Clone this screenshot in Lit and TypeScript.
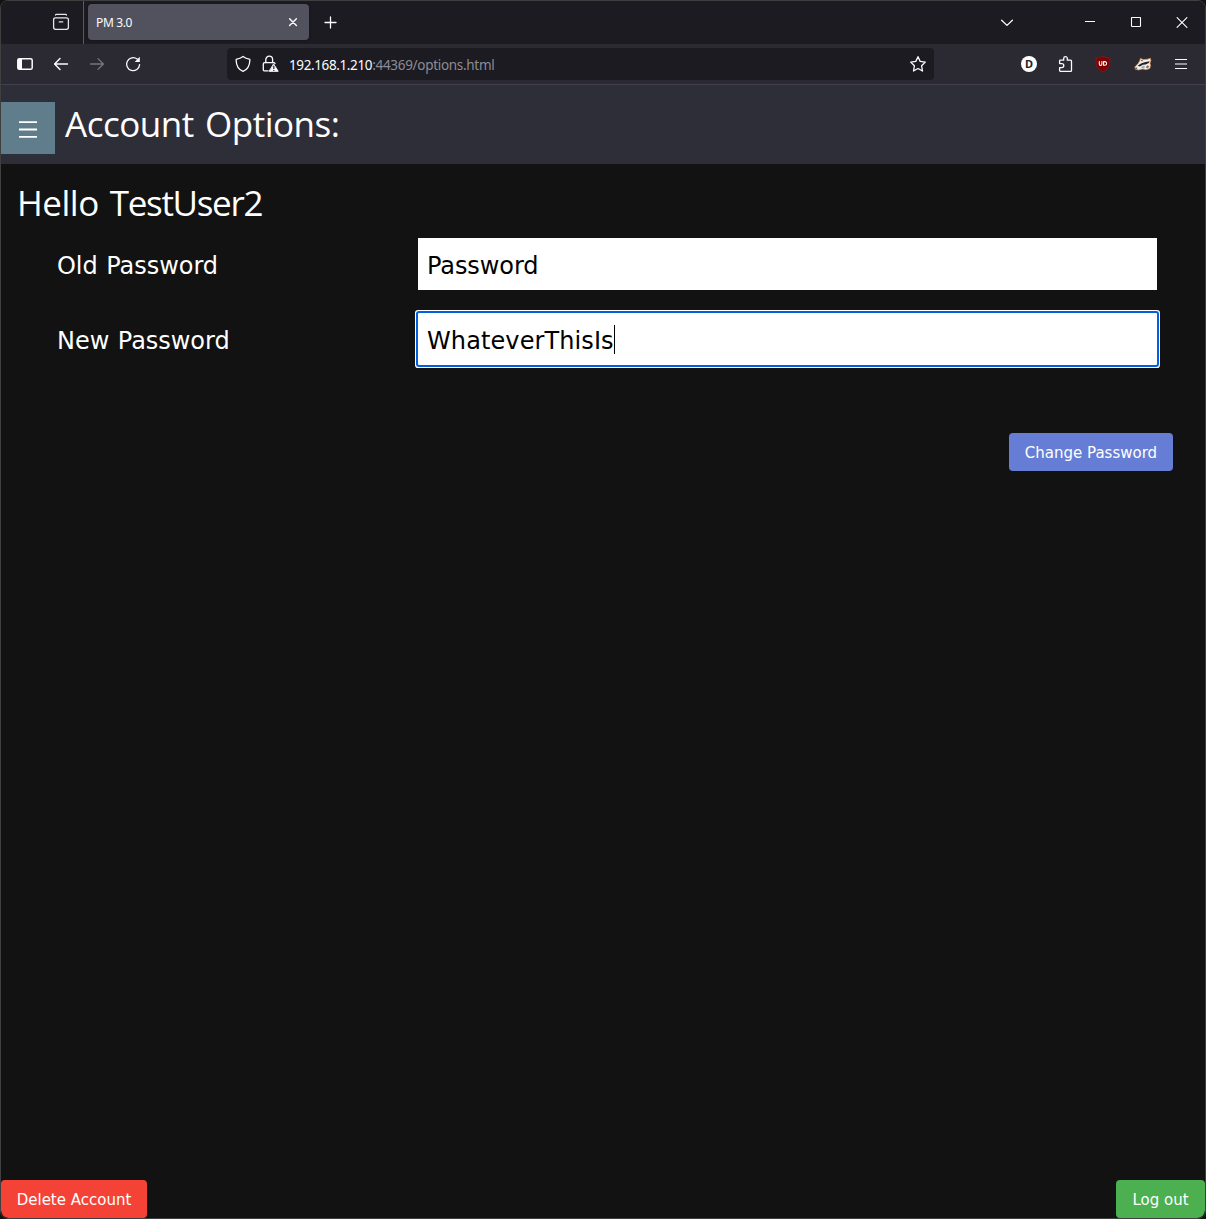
import { LitElement, html, css, svg } from "lit";
import { customElement } from "lit/decorators.js";

const icon = (w: number, h: number, body: unknown) =>
  html`<svg width=${w} height=${h} viewBox="0 0 ${w} ${h}" fill="none" stroke="currentColor" stroke-width="1.3" stroke-linecap="round" stroke-linejoin="round">${body}</svg>`;

const icons = {
  archive: icon(18, 18, svg`<path d="M3.6 2.1V2Q3.6 1.4 4.4 1.4H13.6Q14.4 1.4 14.4 2V2.1"/><path d="M3.5 4.8H14.5Q16.4 4.8 16.4 6.7V14.3Q16.4 16.3 14.4 16.3H3.6Q1.6 16.3 1.6 14.3V6.7Q1.6 4.8 3.5 4.8Z"/><path d="M7.3 8.9H10.7"/>`),
  tabClose: icon(10, 10, svg`<path d="M1.6 1.8L8.4 8.6M8.4 1.8L1.6 8.6" stroke-width="1.4"/>`),
  plus: icon(14, 14, svg`<path d="M6.5 1V12M1 6.5H12"/>`),
  chevron: icon(14, 10, svg`<path d="M1.6 2.2L7 7.4L12.4 2.2"/>`),
  minimize: icon(12, 12, svg`<path d="M1 4.5H11" stroke-width="1" stroke-linecap="butt"/>`),
  maximize: icon(12, 12, svg`<rect x="1.5" y=".5" width="9" height="9" stroke-width="1.1" rx=".6"/>`),
  close: icon(12, 12, svg`<path d="M1.1 .6L10.9 10.4M10.9 .6L1.1 10.4" stroke-width="1.15"/>`),
  sidebar: icon(16, 14, svg`<rect x=".8" y="1.7" width="14.4" height="10.6" rx="1.6" stroke-width="1.5"/><path d="M1 2H5V12H1Z" fill="currentColor" stroke="none"/>`),
  back: icon(16, 14, svg`<path d="M14.5 7H1.8M7 1.6L1.6 7L7 12.4" stroke-width="1.45"/>`),
  forward: icon(16, 14, svg`<path d="M1.5 7H14.2M9 1.6L14.4 7L9 12.4"/>`),
  reload: icon(16, 16, svg`<path d="M14.6 8.6A6.5 6.5 0 1 1 12.2 3.1"/><path d="M14.8 .8V5.9H9.7Z" fill="currentColor" stroke="none"/>`),
  shield: icon(16, 18, svg`<path d="M8 1.4Q10.8 3.6 14.3 4.1Q15 4.2 14.9 5C14.7 10.8 12.6 14.6 8 16.4C3.4 14.6 1.3 10.8 1.1 5Q1 4.2 1.7 4.1Q5.2 3.6 8 1.4Z"/>`),
  lock: icon(18, 18, svg`<path d="M4.8 7.5V4.7A3.4 3.5 0 0 1 11.6 4.7V7.5"/><path d="M7 15.9H3.8Q2.3 15.9 2.3 14.4V9.1Q2.3 7.6 3.8 7.6H12.5Q13.7 7.6 14 8.4"/><path d="M12.8 9.3L17.2 16.3H8.5Z" fill="currentColor" stroke-width="1"/><path d="M12.85 11.2V13.5M12.85 15.3V15.5" stroke="#1c1b22" stroke-width="1.2"/>`),
  star: icon(18, 18, svg`<path d="M9 1.7L11.2 6.4L16.3 7.1L12.6 10.8L13.5 16L9 13.5L4.5 16L5.4 10.8L1.7 7.1L6.8 6.4Z"/>`),
  puzzle: icon(16, 18, svg`<path d="M1.6 8V6Q1.6 5.2 2.4 5.2H5.7V3.4A1.8 1.8 0 0 1 9.3 3.4V5.2H12.6Q13.5 5.2 13.5 6.1V15.4Q13.5 16.3 12.6 16.3H2.4Q1.6 16.3 1.6 15.5V12.6H3.8A2 2 0 0 0 3.8 8.6H1.6Z"/>`),
  ublock: icon(16, 16, svg`<path d="M8 .4Q10.8 2 14.8 2.1V7.6C14.8 11.5 11.5 14 8 15.8C4.5 14 1.2 11.5 1.2 7.6V2.1Q5.2 2 8 .4Z" fill="#800000" stroke="#a51b20" stroke-width=".5"/><path d="M4.3 5.6V7.9Q4.3 9.4 5.6 9.4T6.9 7.9V5.6M8.6 5.6V9.3H9.6Q11.6 9.3 11.6 7.45T9.6 5.6Z" stroke="#fff" stroke-width="1.1"/>`),
  badger: icon(18, 14, svg`<path d="M1 9.8L4.3 6.3L5.8 3.6L6.4 1.4L9.3 2.6L13.3 2.2L16.4 1.2L16.9 3.5L16 6.2L16.6 8.5L15.8 11.6L12.1 12.7L8.5 12L4.6 13L1.5 12.2Z" fill="#f3eeea" stroke="#d98442" stroke-width=".7"/><path d="M3.6 8.8L7 6.4L10.5 5.3L15.6 4.2L14.8 6.1L11.6 7.4L8.9 7.8L5.8 9.6Z" fill="#24252a" stroke="none"/><path d="M6.8 10.6L9.2 8.6L11 9.6L10 11.5Z" fill="#a9abad" stroke="none"/><path d="M11.6 10.2L13.4 8.2L15.4 9.2L13.6 11.4Z" fill="#77797c" stroke="none"/><path d="M6.8 2.8L9 3.4L8 4.8Z" fill="#444" stroke="none"/><path d="M1.9 11.4L2.8 11.1" stroke="#222" stroke-width="1"/>`),
  menu: icon(14, 12, svg`<path d="M1 1.5H13M1 6H13M1 10.5H13" stroke-width="1.2" stroke-linecap="butt"/>`),
  nav: icon(18, 18, svg`<path d="M0 2.2H18M0 9.5H18M0 16.8H18" stroke-width="1.8" stroke-linecap="butt"/>`),
};

@customElement("browser-chrome")
class BrowserChrome extends LitElement {
  static styles = css`
    :host { display: block; color: #fbfbfe; font-family: "Noto Sans", "Open Sans", sans-serif; }
    svg { display: block; flex: none; }
    .tabs { display: flex; height: 43px; background: #1c1b22; align-items: center; }
    .archive { width: 83px; box-sizing: border-box; padding-left: 51px; height: 43px; display: flex; align-items: center; border-right: 1px solid #5a5961; color: #e6e6ea; }
    .archive svg { margin-top: -1px; }
    .tab { margin: -1px 0 0 4px; width: 221px; height: 36px; box-sizing: border-box; padding: 0 11px 0 8px; background: #52525e; border-radius: 4px; display: flex; align-items: center; justify-content: space-between; font-size: 12px; letter-spacing: -0.35px; box-shadow: 0 0 3px #0006; }
    .tab span { padding-top: 1px; }
    .plus { margin-left: 15px; flex: 1; }
    .controls { display: flex; align-items: center; }
    .controls svg { margin-right: 17px; margin-left: 17px; }
    .controls .chev { margin-right: 53px; }
    .controls .chev svg { margin: 0; }
    .bar { display: flex; height: 40px; background: #2b2a33; align-items: center; border-bottom: 1px solid #42414b; }
    .navs { display: flex; width: 226px; box-sizing: border-box; padding-left: 16px; gap: 20px; align-items: center; }
    .off { color: #77767e; }
    .url { display: flex; align-items: center; width: 707px; height: 32px; background: #1c1b22; border-radius: 4px; box-sizing: border-box; padding: 0 7px 0 8px; }
    .lock { margin: 0 10px 0 10px; }
    .address { flex: 1; font-size: 13.5px; letter-spacing: -0.3px; padding-top: 2px; color: #8d8c95; white-space: nowrap; }
    .host { color: #fbfbfe; letter-spacing: -0.38px; }
    .ext { flex: 1; display: flex; align-items: center; padding-left: 87px; }
    .d { width: 16px; height: 16px; border-radius: 50%; background: #fff; color: #222129; font: bold 11px/16px "Noto Sans", sans-serif; text-align: center; }
    .puzzle { margin-left: 21px; }
    .ublock { margin-left: 21px; }
    .badger { margin-left: 23px; }
    .menu { margin-left: 22px; }
  `;
  render() {
    return html`
      <div class="tabs">
        <div class="archive">${icons.archive}</div>
        <div class="tab"><span>PM 3.0</span>${icons.tabClose}</div>
        <div class="plus">${icons.plus}</div>
        <div class="controls"><span class="chev">${icons.chevron}</span>${icons.minimize}${icons.maximize}${icons.close}</div>
      </div>
      <div class="bar">
        <div class="navs"><span>${icons.sidebar}</span><span>${icons.back}</span><span class="off">${icons.forward}</span><span>${icons.reload}</span></div>
        <div class="url">${icons.shield}<span class="lock">${icons.lock}</span><span class="address"><span class="host">192.168.1.210</span>:44369/options.html</span>${icons.star}</div>
        <div class="ext"><span class="d">D</span><span class="puzzle">${icons.puzzle}</span><span class="ublock">${icons.ublock}</span><span class="badger">${icons.badger}</span><span class="menu">${icons.menu}</span></div>
      </div>`;
  }
}

@customElement("account-options")
class AccountOptions extends LitElement {
  static styles = css`
    :host { display: flex; flex-direction: column; flex: 1; background: #121212; color: #fff; font-family: "DejaVu Sans", Verdana, sans-serif; }
    h1, h2 { margin: 0; font: 400 35px/54px "Open Sans", "Segoe UI", sans-serif; white-space: nowrap; word-spacing: 2.5px; }
    h1 { margin-left: 10px; height: 54px; margin-top: -5px; letter-spacing: -0.47px; }
    h2 { padding: 12px 0 1px 16px; letter-spacing: -0.5px; }
    .user { letter-spacing: -1.33px; }
    header { display: flex; height: 79px; box-sizing: border-box; padding-top: 17px; background: #2e2e38; }
    .nav { width: 54px; height: 52px; border: 0; border-radius: 0; padding: 0; background: #607d8b; color: #fff; display: grid; place-items: center; }
    .nav svg { display: block; margin-top: 2px; }
    .fields { display: grid; grid-template-columns: 361px 739px; row-gap: 23px; padding: 7px 0 0 56px; align-items: center; font-size: 24px; }
    label { letter-spacing: -0.04px; word-spacing: 1px; white-space: nowrap; padding-top: 3px; }
    .input { height: 52px; box-sizing: border-box; background: #fff; color: #000; padding: 3px 9px 0; display: flex; align-items: center; letter-spacing: -0.08px; }
    .focus { outline: 2px solid #0060df; outline-offset: 0; box-shadow: 0 0 0 3px #fff; border-radius: 1px; letter-spacing: 0.1px; }
    .caret { width: 1px; height: 29px; margin-top: -3px; background: #000; }
    button { border: 0; border-radius: 4px; height: 38px; padding: 2px 0 0; color: #fff; font: 15px "DejaVu Sans", Verdana, sans-serif; white-space: nowrap; }
    .change { width: 164px; background: #667dd5; align-self: flex-end; margin: 68px 32px 0 0; }
    footer { margin-top: auto; display: flex; justify-content: space-between; }
    .delete { width: 146px; background: #f44336; border-bottom-left-radius: 8px; }
    .logout { width: 89px; background: #4caf50; border-bottom-right-radius: 8px; }
  `;
  render() {
    return html`
      <header><button class="nav" aria-label="Menu">${icons.nav}</button><h1>Account Options:</h1></header>
      <h2>Hello <span class="user">TestUser2</span></h2>
      <div class="fields">
        <label>Old Password</label><div class="input">Password</div>
        <label>New Password</label><div class="input focus">WhateverThisIs<span class="caret"></span></div>
      </div>
      <button class="change">Change Password</button>
      <footer><button class="delete">Delete Account</button><button class="logout">Log out</button></footer>`;
  }
}

@customElement("app-root")
class AppRoot extends LitElement {
  static styles = css`
    :host { display: block; width: 1206px; height: 1219px; background: #121212; overflow: hidden; }
    .window { display: flex; flex-direction: column; box-sizing: border-box; height: 1219px; border: 1px solid #3f3f3f; border-radius: 8px; overflow: hidden; }
  `;
  render() {
    return html`<div class="window"><browser-chrome></browser-chrome><account-options></account-options></div>`;
  }
}
